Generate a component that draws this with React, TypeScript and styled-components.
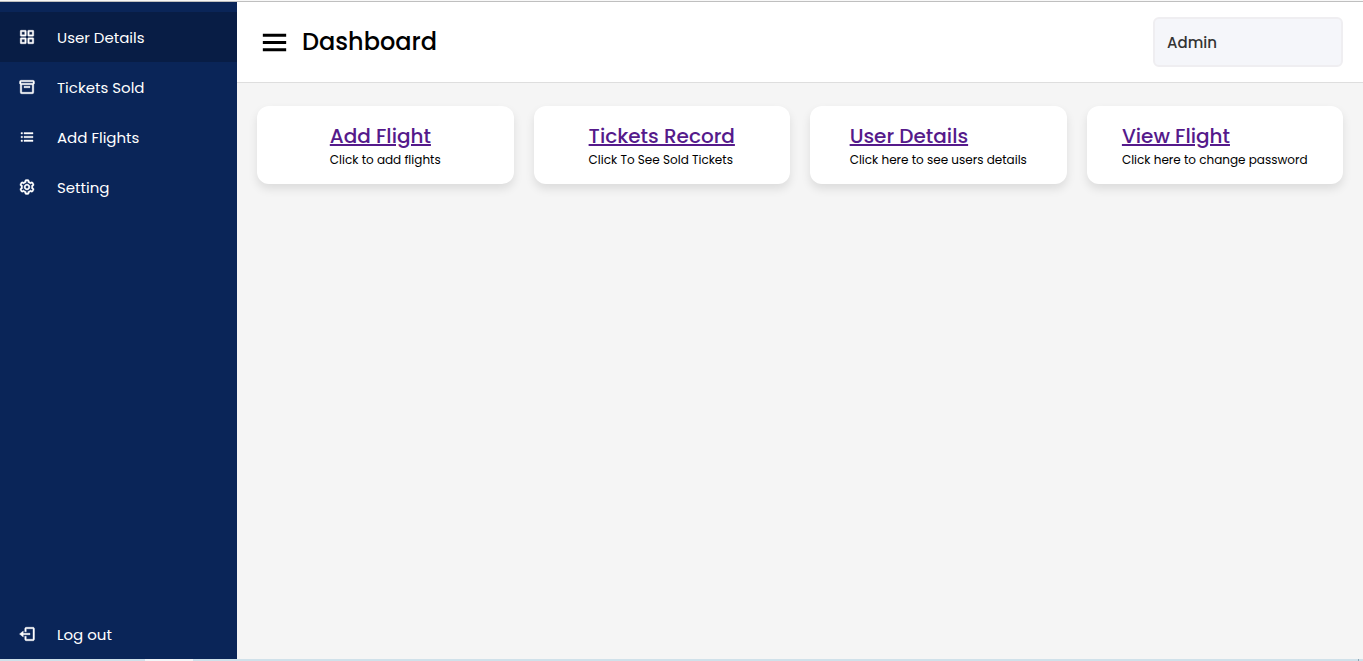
import React from "react";
import styled, { createGlobalStyle } from "styled-components";
import { BiGridAlt, BiBox, BiListUl, BiCog, BiLogOut, BiMenu } from "react-icons/bi";

const GlobalStyle = createGlobalStyle`
  *, *::before, *::after {
    box-sizing: border-box;
  }
  body {
    margin: 0;
    background: #f5f5f5;
    font-family: Poppins, Inter, "Liberation Sans", sans-serif;
    color: #000;
  }
`;

const Page = styled.div`
  display: flex;
  flex-direction: column;
  min-height: 100vh;
`;

const TopEdge = styled.div`
  height: 2px;
  background: #f8f8f8;
  border-bottom: 1px solid #bfbfbf;
`;

const BottomEdge = styled.div`
  display: flex;
  height: 2px;
  padding: 0 4px 0 145px;
  background: #d0e1ea;
`;

const EdgeTab = styled.span`
  width: 48px;
  background: #f2f5f7;
`;

const EdgeMark = styled.span`
  width: 1px;
  margin-left: auto;
  background: #8fa3b3;
`;

const Shell = styled.div`
  display: flex;
  flex: 1;
`;

const Sidebar = styled.nav`
  display: flex;
  flex: none;
  width: 237px;
  padding-top: 10px;
  background: #0a2558;
`;

const NavList = styled.ul`
  display: flex;
  flex: 1;
  flex-direction: column;
  margin: 0;
  padding: 0;
  list-style: none;
`;

const NavItem = styled.li<{ $last?: boolean }>`
  margin-top: ${(p) => (p.$last ? "auto" : "0")};
`;

const NavLink = styled.a<{ $active?: boolean }>`
  display: flex;
  align-items: center;
  height: 50px;
  gap: 21px;
  padding-left: 18px;
  background: ${(p) => (p.$active ? "#081d45" : "transparent")};
  color: #fff;
  font-size: 15px;
  text-decoration: none;

  svg {
    width: 18px;
    height: 18px;
    stroke-width: 0.5;
  }
`;

const Main = styled.main`
  flex: 1;
  min-width: 0;
`;

const Header = styled.header`
  display: flex;
  align-items: center;
  justify-content: space-between;
  height: 81px;
  padding: 0 20px;
  background: #fff;
  border-bottom: 1px solid #dedede;
`;

const TitleGroup = styled.div`
  display: flex;
  align-items: center;
  gap: 10px;
`;

const MenuButton = styled.button`
  display: flex;
  padding: 0;
  border: 0;
  background: none;
  color: #000;

  svg {
    width: 35px;
    height: 35px;
  }
`;

const Title = styled.h1`
  margin: 0;
  font-size: 24px;
  font-weight: 500;
  line-height: 36px;
`;

const Profile = styled.button`
  width: 190px;
  height: 50px;
  padding: 0 12px;
  border: 2px solid #efeef1;
  border-radius: 6px;
  background: #f5f6fa;
  color: #333;
  font: inherit;
  font-size: 15px;
  font-weight: 500;
  text-align: left;
`;

const Cards = styled.section`
  display: grid;
  grid-template-columns: repeat(4, 1fr);
  gap: 20px;
  padding: 23px 20px;
`;

const Card = styled.article`
  display: flex;
  justify-content: center;
  padding: 15px 14px;
  border-radius: 12px;
  background: #fff;
  box-shadow: 0 5px 10px rgba(0, 0, 0, 0.1);
`;

const CardLink = styled.a`
  display: block;
  color: #551a8b;
  font-size: 20px;
  font-weight: 500;
  line-height: 30px;
`;

const CardNote = styled.p`
  margin: 0;
  font-size: 12px;
  line-height: 18px;
`;

const navItems = [
  { label: "User Details", Icon: BiGridAlt, active: true },
  { label: "Tickets Sold", Icon: BiBox },
  { label: "Add Flights", Icon: BiListUl },
  { label: "Setting", Icon: BiCog },
  { label: "Log out", Icon: BiLogOut, last: true },
];

const cards = [
  { title: "Add Flight", note: "Click to add flights" },
  { title: "Tickets Record", note: "Click To See Sold Tickets" },
  { title: "User Details", note: "Click here to see users details" },
  { title: "View Flight", note: "Click here to change password" },
];

export default function App() {
  return (
    <Page>
      <GlobalStyle />
      <TopEdge />
      <Shell>
        <Sidebar>
          <NavList>
            {navItems.map(({ label, Icon, active, last }) => (
              <NavItem key={label} $last={last}>
                <NavLink href="#" $active={active}>
                  <Icon aria-hidden />
                  {label}
                </NavLink>
              </NavItem>
            ))}
          </NavList>
        </Sidebar>
        <Main>
          <Header>
            <TitleGroup>
              <MenuButton type="button" aria-label="Toggle sidebar">
                <BiMenu />
              </MenuButton>
              <Title>Dashboard</Title>
            </TitleGroup>
            <Profile type="button">Admin</Profile>
          </Header>
          <Cards>
            {cards.map(({ title, note }) => (
              <Card key={title}>
                <div>
                  <CardLink href="#">{title}</CardLink>
                  <CardNote>{note}</CardNote>
                </div>
              </Card>
            ))}
          </Cards>
        </Main>
      </Shell>
      <BottomEdge>
        <EdgeTab />
        <EdgeMark />
      </BottomEdge>
    </Page>
  );
}
